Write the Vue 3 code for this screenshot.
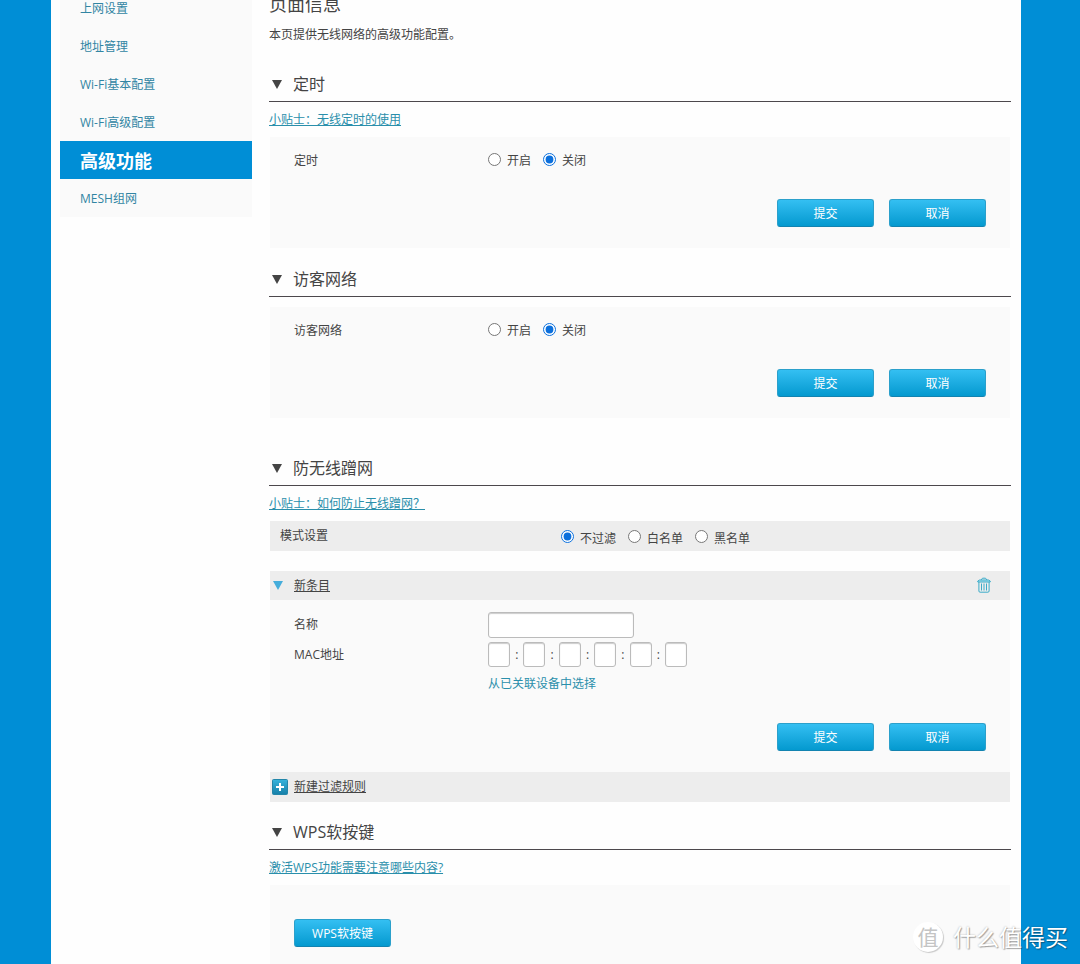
<script setup>
import { ref } from 'vue'

const menu = [
  { label: '上网设置' },
  { label: '地址管理' },
  { label: 'Wi-Fi基本配置' },
  { label: 'Wi-Fi高级配置' },
  { label: '高级功能', active: true },
  { label: 'MESH组网' },
]

const timer = ref('off')
const guest = ref('off')
const mode = ref('none')
const ruleName = ref('')
const mac = ref(['', '', '', '', '', ''])

const switches = [
  { value: 'on', label: '开启' },
  { value: 'off', label: '关闭' },
]
const modes = [
  { value: 'none', label: '不过滤' },
  { value: 'white', label: '白名单' },
  { value: 'black', label: '黑名单' },
]
</script>

<template>
  <div class="page">
    <div class="sheet">
      <nav class="side">
        <a v-for="m in menu" :key="m.label" href="#" :class="{ active: m.active }">{{ m.label }}</a>
      </nav>

      <main class="main">
        <h1>页面信息</h1>
        <p class="desc">本页提供无线网络的高级功能配置。</p>

        <section class="first">
          <h2><i class="tri"></i>定时</h2>
          <div class="tip"><a href="#">小贴士：无线定时的使用</a></div>
          <form class="panel" @submit.prevent>
            <div class="row">
              <span class="name">定时</span>
              <div class="radios">
                <label v-for="s in switches" :key="s.value">
                  <input v-model="timer" type="radio" name="timer" :value="s.value" />{{ s.label }}
                </label>
              </div>
            </div>
            <div class="actions">
              <button type="submit" class="btn">提交</button>
              <button type="reset" class="btn">取消</button>
            </div>
          </form>
        </section>

        <section class="guest">
          <h2><i class="tri"></i>访客网络</h2>
          <form class="panel" @submit.prevent>
            <div class="row">
              <span class="name">访客网络</span>
              <div class="radios">
                <label v-for="s in switches" :key="s.value">
                  <input v-model="guest" type="radio" name="guest" :value="s.value" />{{ s.label }}
                </label>
              </div>
            </div>
            <div class="actions">
              <button type="submit" class="btn">提交</button>
              <button type="reset" class="btn">取消</button>
            </div>
          </form>
        </section>

        <section class="filter">
          <h2><i class="tri"></i>防无线蹭网</h2>
          <div class="tip"><a href="#">小贴士：如何防止无线蹭网？</a></div>
          <div class="bar mode">
            <span class="mode-name">模式设置</span>
            <div class="radios">
              <label v-for="m in modes" :key="m.value">
                <input v-model="mode" type="radio" name="mode" :value="m.value" />{{ m.label }}
              </label>
            </div>
          </div>
          <div class="bar entry">
            <i class="tri blue"></i>
            <a href="#">新条目</a>
            <button type="button" class="trash" aria-label="删除">
              <svg width="14" height="16" viewBox="0 0 14 16" fill="none" stroke="#3cabc8">
                <path d="M4 3 L5.5 1.2 H8.5 L10 3" />
                <path d="M.8 5 V4 L2.5 3 H11.5 L13.2 4 V5 Z" fill="#a9e2ef" />
                <path d="M1.9 5 V14 Q1.9 15.2 3.1 15.2 H10.9 Q12.1 15.2 12.1 14 V5" />
                <path d="M4.5 6.5 V13.5 M7 6.5 V13.5 M9.5 6.5 V13.5" />
              </svg>
            </button>
          </div>
          <form class="panel rule" @submit.prevent>
            <div class="row">
              <label class="name" for="rule-name">名称</label>
              <input id="rule-name" v-model="ruleName" class="field long" type="text" />
            </div>
            <div class="row">
              <label class="name" for="mac-0">MAC地址</label>
              <div class="mac">
                <template v-for="(part, i) in mac" :key="i">
                  <span v-if="i">:</span>
                  <input :id="'mac-' + i" v-model="mac[i]" class="field" type="text" maxlength="2" />
                </template>
              </div>
            </div>
            <div class="pick"><a href="#">从已关联设备中选择</a></div>
            <div class="actions">
              <button type="submit" class="btn">提交</button>
              <button type="reset" class="btn">取消</button>
            </div>
          </form>
          <div class="bar add">
            <svg width="16" height="16" viewBox="0 0 16 16">
              <defs>
                <linearGradient id="plus" x1="0" y1="0" x2="0" y2="1">
                  <stop offset="0" stop-color="#35b3dc" />
                  <stop offset="1" stop-color="#167fa8" />
                </linearGradient>
              </defs>
              <rect x=".5" y=".5" width="15" height="15" rx="1" fill="url(#plus)" stroke="#2386a9" />
              <path d="M8 4 V12 M4 8 H12" stroke="#fff" stroke-width="2" />
            </svg>
            <a href="#">新建过滤规则</a>
          </div>
        </section>

        <section class="wps">
          <h2><i class="tri"></i>WPS软按键</h2>
          <div class="tip"><a href="#">激活WPS功能需要注意哪些内容?</a></div>
          <div class="panel wps-panel">
            <button type="button" class="btn">WPS软按键</button>
          </div>
        </section>
      </main>
    </div>

    <div class="mark">
      <span class="seal">值</span>
      <span>什么值得买</span>
    </div>
  </div>
</template>

<style>
body {
  margin: 0;
  background: #008ed6;
}
</style>

<style scoped>
.page {
  position: relative;
  box-sizing: border-box;
  min-height: 100vh;
  padding: 0 59px 0 51px;
  overflow: hidden;
  background: #008ed6;
  color: #444;
  font: 12px/24px "Open Sans", "Noto Sans CJK SC", sans-serif;
}
.sheet {
  display: flex;
  box-sizing: border-box;
  min-height: calc(100vh + 11px);
  margin-top: -11px;
  padding: 0 10px 0 9px;
  background: #fefefe;
}
a {
  color: #2a8fab;
}
.side {
  flex: none;
  align-self: flex-start;
  width: 192px;
  background: #fafafa;
}
.side a {
  display: block;
  padding: 2px 0 0 20px;
  line-height: 36px;
  color: #3185a3;
  text-decoration: none;
}
.side a.active {
  background: #008ed6;
  color: #fff;
  font-size: 18px;
  font-weight: bold;
}
.main {
  display: flex;
  flex: 1;
  flex-direction: column;
  margin-left: 17px;
}
h1 {
  margin: 0;
  font-size: 18px;
  font-weight: normal;
  line-height: 30px;
}
.desc {
  margin: 0;
  line-height: 32px;
}
h2 {
  display: flex;
  align-items: center;
  gap: 11px;
  margin: 0;
  padding-left: 3px;
  border-bottom: 1px solid #4c484c;
  font-size: 16px;
  font-weight: normal;
  line-height: 34px;
}
.tri {
  border: 5px solid transparent;
  border-top: 9px solid #444;
  border-bottom: 0;
}
.tri.blue {
  border-top-color: #45addb;
}
.first {
  margin-top: 16px;
}
.guest {
  margin-top: 14px;
}
.guest .panel {
  margin-top: 10px;
}
.filter {
  margin-top: 33px;
}
.tip {
  line-height: 35px;
}
.panel {
  margin: 0 1px;
  padding: 10px 24px 21px;
  background: #fafafa;
}
.row {
  display: flex;
  align-items: center;
  min-height: 28px;
}
.name {
  flex: none;
  width: 194px;
}
.radios {
  display: flex;
  gap: 12px;
}
.radios label {
  display: flex;
  align-items: center;
  gap: 6px;
}
.radios input {
  width: 13px;
  height: 13px;
  margin: 0 0 4px;
  accent-color: #0b6fdc;
}
.actions {
  display: flex;
  justify-content: flex-end;
  gap: 15px;
  margin-top: 24px;
}
.btn {
  width: 97px;
  height: 28px;
  padding: 2px 0 0;
  border: 1px solid #2ba0cb;
  border-bottom-color: #1283b0;
  border-radius: 3px;
  background: linear-gradient(#34bff2, #0499cf);
  color: #fff;
  font: inherit;
  line-height: 24px;
}
.bar {
  display: flex;
  align-items: center;
  margin: 0 1px;
  background: #ededed;
}
.bar a {
  color: #444;
}
.mode {
  height: 30px;
  padding-left: 10px;
}
.mode-name {
  width: 281px;
}
.mode .radios {
  padding-top: 5px;
}
.entry {
  height: 29px;
  margin-top: 20px;
  padding: 0 19px 0 3px;
}
.entry a {
  margin-left: 11px;
}
.trash {
  display: flex;
  margin-left: auto;
  padding: 0 0 2px;
  border: 0;
  background: none;
}
.rule {
  padding-top: 12px;
}
.rule .row {
  min-height: 25px;
}
.rule .row + .row {
  margin-top: 4px;
}
.field {
  box-sizing: border-box;
  width: 22px;
  height: 25px;
  padding: 0 3px;
  border: 1px solid #bbb;
  border-radius: 3px;
  background: #fff;
  box-shadow: inset 0 1px 1px #ccc;
  font: inherit;
}
.field.long {
  width: 146px;
  height: 26px;
}
.mac {
  display: flex;
  align-items: center;
  width: 199px;
}
.mac span {
  flex: 1;
  text-align: center;
}
.pick {
  margin-left: 194px;
  line-height: 34px;
}
.pick a {
  text-decoration: none;
}
.rule .actions {
  margin-top: 22px;
}
.add {
  gap: 6px;
  height: 30px;
  padding-left: 2px;
}
.wps {
  display: flex;
  flex: 1;
  flex-direction: column;
  margin-top: 13px;
}
.wps-panel {
  flex: 1;
  padding: 34px 24px 16px;
}
.mark {
  position: absolute;
  right: 12px;
  bottom: 10px;
  display: flex;
  align-items: center;
  gap: 10px;
  color: #fff;
  font-size: 23px;
  line-height: 34px;
  text-shadow: 1px 1px 1px rgba(0, 0, 0, 0.3), 0 0 2px rgba(0, 0, 0, 0.3);
  pointer-events: none;
}
.seal {
  width: 30px;
  height: 30px;
  border-radius: 50%;
  background: #fff;
  box-shadow: 1px 1px 1px rgba(0, 0, 0, 0.2);
  color: #c4c4c4;
  font-size: 21px;
  line-height: 30px;
  text-align: center;
  text-shadow: none;
}
</style>
